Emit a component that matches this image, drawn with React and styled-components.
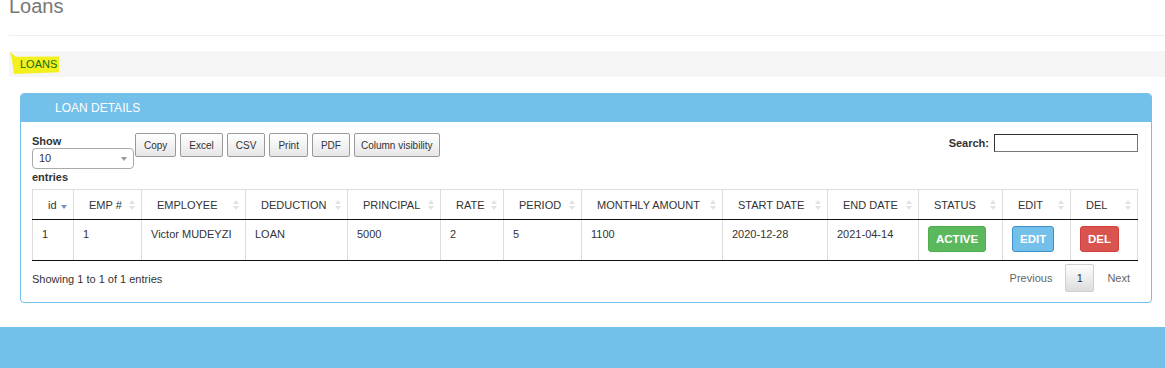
import React from "react";
import styled, { createGlobalStyle } from "styled-components";

const GlobalStyle = createGlobalStyle`
  html, body {
    margin: 0;
    padding: 0;
    background: #fff;
    overflow: hidden;
  }
  body {
    font-family: "Liberation Sans", Arial, sans-serif;
    color: #333;
  }
`;

const Page = styled.div`
  width: 1165px;
  height: 368px;
  overflow: hidden;
`;

const Content = styled.div`
  padding-left: 9px;
`;

const Title = styled.h1`
  margin: -5px 0 0;
  font-size: 20px;
  line-height: 22px;
  font-weight: normal;
  color: #777;
`;

const Rule = styled.hr`
  margin: 18px 0 15px;
  border: 0;
  border-top: 1px solid #eee;
`;

const Crumbs = styled.div`
  height: 26px;
  background: #f5f5f5;
  border-radius: 3px 0 0 3px;
  display: flex;
  align-items: center;
`;

const Marker = styled.span`
  margin-left: 1px;
  margin-top: -2px;
  padding: 7px 2px 4px 10px;
  background: #f3f01e;
  color: #0d6b1d;
  font-size: 11px;
  line-height: 11px;
  clip-path: polygon(0 0, 12% 22%, 100% 20%, 100% 92%, 8% 100%, 4% 35%);
`;

const Panel = styled.section`
  margin: 16px 13px 24px 11px;
  border: 1px solid #73c0ea;
  border-radius: 4px;
  background: #fff;
`;

const PanelHead = styled.div`
  height: 28px;
  background: #73c0ea;
  color: #fff;
  font-size: 12px;
  display: flex;
  align-items: center;
  padding-left: 34px;
  border-radius: 3px 3px 0 0;
`;

const PanelBody = styled.div`
  padding: 11px 13px 10px 11px;
`;

const Toolbar = styled.div`
  display: flex;
  align-items: flex-start;
`;

const Length = styled.label`
  width: 103px;
  font-size: 11px;
  font-weight: bold;
  line-height: 14px;
  padding-top: 1px;
`;

const Select = styled.div`
  position: relative;
  height: 19px;
  margin: 0 0 1px;
  border: 1px solid #aaa;
  border-radius: 4px;
  font-weight: normal;
  font-size: 11px;
  line-height: 19px;
  padding-left: 6px;
  box-sizing: content-box;
  width: 94px;
  &::after {
    content: "";
    position: absolute;
    right: 6px;
    top: 8px;
    border-left: 3px solid transparent;
    border-right: 3px solid transparent;
    border-top: 4px solid #999;
  }
`;

const Buttons = styled.div`
  display: flex;
  gap: 4px;
`;

const ToolButton = styled.button`
  height: 24px;
  padding: 0 ${(p) => p.$pad || 8}px;
  font-family: "Liberation Sans", Arial, sans-serif;
  font-size: 10px;
  color: #333;
  background: linear-gradient(#ffffff, #e6e6e6);
  border: 1px solid #999;
  border-radius: 2px;
  min-width: ${(p) => p.$min || 0}px;
`;

const Search = styled.label`
  margin-left: auto;
  display: flex;
  align-items: center;
  gap: 5px;
  font-size: 11px;
  font-weight: bold;
  margin-top: 1px;
`;

const SearchInput = styled.div`
  width: 142px;
  height: 16px;
  border: 1px solid #767676;
  border-top-color: #333;
  border-left-color: #333;
  background: #fff;
`;

const Table = styled.table`
  margin-top: 5px;
  width: 1105px;
  table-layout: fixed;
  border-collapse: collapse;
  font-size: 11px;
`;

const Th = styled.th`
  position: relative;
  height: 29px;
  padding: 0 14px 0 15px;
  text-align: left;
  font-weight: normal;
  color: #333;
  border: 1px solid #ddd;
  border-bottom: 1px solid #111;
  white-space: nowrap;
`;

const Sort = styled.svg`
  position: absolute;
  right: 6px;
  top: 10px;
`;

const Td = styled.td`
  height: 33px;
  padding: 7px 9px 0;
  vertical-align: top;
  line-height: 14px;
  border: 1px solid #ddd;
  border-top: 0;
  border-bottom: 1px solid #111;
`;

const Badge = styled.span`
  display: inline-block;
  height: 24px;
  line-height: 24px;
  padding: 0 ${(p) => p.$pad}px;
  margin-top: -1px;
  font-size: 11.5px;
  font-weight: bold;
  color: #fff;
  border-radius: 3px;
  background: ${(p) => p.$bg};
  border: 1px solid ${(p) => p.$border};
`;

const Footer = styled.div`
  display: flex;
  align-items: center;
  justify-content: space-between;
  margin-top: 3px;
  font-size: 11px;
`;

const Info = styled.div`
  padding-top: 1px;
`;

const Pager = styled.div`
  display: flex;
  align-items: center;
  color: #666;
`;

const PageLink = styled.span`
  padding: 0 ${(p) => p.$right}px 0 ${(p) => p.$left}px;
`;

const PageCurrent = styled.span`
  width: 27px;
  height: 26px;
  display: flex;
  align-items: center;
  justify-content: center;
  color: #333;
  border: 1px solid #cfcfcf;
  border-radius: 2px;
  background: linear-gradient(#ffffff, #dcdcdc);
`;

const BottomBar = styled.div`
  height: 44px;
  background: #73c0ea;
`;

const SortIcon = ({ active }) =>
  active ? (
    <Sort width="6" height="10" viewBox="0 0 6 10">
      <path d="M0 5 L6 5 L3 9 Z" fill="#7b8cc9" />
    </Sort>
  ) : (
    <Sort width="6" height="10" viewBox="0 0 6 10">
      <path d="M0 4 L6 4 L3 0 Z" fill="#e2e2e2" />
      <path d="M0 6 L6 6 L3 10 Z" fill="#e2e2e2" />
    </Sort>
  );

const columns = [
  ["id", 41],
  ["EMP #", 68],
  ["EMPLOYEE", 104],
  ["DEDUCTION", 102],
  ["PRINCIPAL", 93],
  ["RATE", 63],
  ["PERIOD", 78],
  ["MONTHLY AMOUNT", 141],
  ["START DATE", 105],
  ["END DATE", 91],
  ["STATUS", 84],
  ["EDIT", 68],
  ["DEL", 67],
];

const row = ["1", "1", "Victor MUDEYZI", "LOAN", "5000", "2", "5", "1100", "2020-12-28", "2021-04-14"];

export default function App() {
  return (
    <Page>
      <GlobalStyle />
      <Content>
        <Title>Loans</Title>
        <Rule />
        <Crumbs>
          <Marker>LOANS</Marker>
        </Crumbs>
        <Panel>
          <PanelHead>LOAN DETAILS</PanelHead>
          <PanelBody>
            <Toolbar>
              <Length>
                Show
                <Select>10</Select>
                entries
              </Length>
              <Buttons>
                <ToolButton>Copy</ToolButton>
                <ToolButton>Excel</ToolButton>
                <ToolButton>CSV</ToolButton>
                <ToolButton>Print</ToolButton>
                <ToolButton $min={38}>PDF</ToolButton>
                <ToolButton $pad={6}>Column visibility</ToolButton>
              </Buttons>
              <Search>
                Search:
                <SearchInput />
              </Search>
            </Toolbar>
            <Table>
              <colgroup>
                {columns.map(([name, w]) => (
                  <col key={name} style={{ width: w }} />
                ))}
              </colgroup>
              <thead>
                <tr>
                  {columns.map(([name], i) => (
                    <Th key={name}>
                      {name}
                      <SortIcon active={i === 0} />
                    </Th>
                  ))}
                </tr>
              </thead>
              <tbody>
                <tr>
                  {row.map((v, i) => (
                    <Td key={i}>{v}</Td>
                  ))}
                  <Td>
                    <Badge $bg="#5cb85c" $border="#4cae4c" $pad={7}>ACTIVE</Badge>
                  </Td>
                  <Td>
                    <Badge $bg="#73c0ea" $border="#3f8fcb" $pad={7}>EDIT</Badge>
                  </Td>
                  <Td>
                    <Badge $bg="#d9534f" $border="#d43f3a" $pad={7}>DEL</Badge>
                  </Td>
                </tr>
              </tbody>
            </Table>
            <Footer>
              <Info>Showing 1 to 1 of 1 entries</Info>
              <Pager>
                <PageLink $left={13} $right={13}>Previous</PageLink>
                <PageCurrent>1</PageCurrent>
                <PageLink $left={13} $right={8}>Next</PageLink>
              </Pager>
            </Footer>
          </PanelBody>
        </Panel>
      </Content>
      <BottomBar />
    </Page>
  );
}
